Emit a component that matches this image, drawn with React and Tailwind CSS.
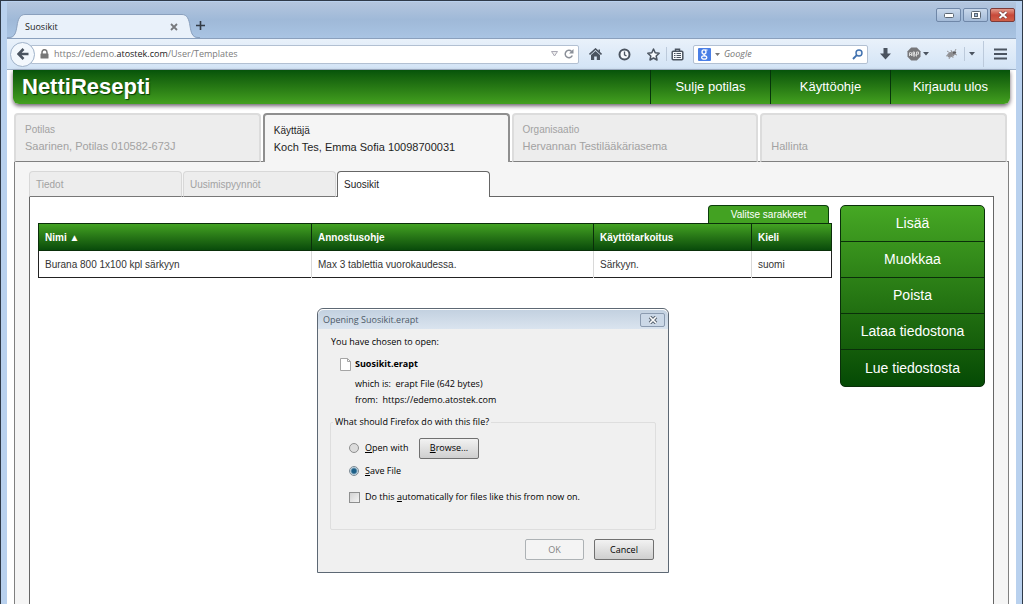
import React from "react";

const ICON = "#4b5460";

function TitleBar() {
  return (
    <div className="flex h-9 items-start justify-between bg-linear-to-b from-[#b4c6de] via-[#9fb9d8] to-[#a9c4e3]">
      <div className="flex h-9 items-end" role="tablist">
        <svg width="18" height="24" viewBox="0 0 18 24" aria-hidden="true">
          <path d="M0 24H2C8 24 9 18 10 12C11 5 13 .5 18 .5V24Z" fill="#e9f1fa" />
          <path d="M0 23.500H2C8 23.500 9 18 10 12C11 5 13 .5 18 .5" fill="none" stroke="#8aa0bd" />
        </svg>
        <div className="flex h-6 w-[157px] items-center justify-between border-t border-[#8aa0bd] bg-[#e9f1fa]">
          <button role="tab" aria-selected="true" className="text-[9px] text-[#1c1c1c]">Suosikit</button>
          <button aria-label="Close tab" className="mr-1">
            <svg width="8" height="8" viewBox="0 0 8 8"><path d="M1 1L7 7M7 1L1 7" stroke="#77797d" strokeWidth="1.800" /></svg>
          </button>
        </div>
        <svg width="18" height="24" viewBox="0 0 18 24" aria-hidden="true">
          <path d="M18 24H16C10 24 9 18 8 12C7 5 5 .5 0 .5V24Z" fill="#e9f1fa" />
          <path d="M18 23.500H16C10 23.500 9 18 8 12C7 5 5 .5 0 .5" fill="none" stroke="#8aa0bd" />
        </svg>
        <button aria-label="New tab" className="-ml-1 mb-2">
          <svg width="9" height="9" viewBox="0 0 9 9"><path d="M4.500 0V9M0 4.500H9" stroke="#333b45" strokeWidth="1.600" /></svg>
        </button>
      </div>
      <div className="flex gap-0.5 pt-1.5 pr-px">
        <button aria-label="Minimize" className="flex h-3.5 w-[25px] items-center justify-center rounded-xs border border-[#6f87a8] bg-linear-to-b from-[#c9d8eb] to-[#a3bad8]">
          <svg width="10" height="5" viewBox="0 0 10 5"><rect x=".5" y=".5" width="9" height="4" rx="1" fill="#fff" stroke="#5b6673" /></svg>
        </button>
        <button aria-label="Maximize" className="flex h-3.5 w-[25px] items-center justify-center rounded-xs border border-[#6f87a8] bg-linear-to-b from-[#c9d8eb] to-[#a3bad8]">
          <svg width="10" height="8" viewBox="0 0 10 8"><rect x=".5" y=".5" width="9" height="7" rx="1" fill="#fff" stroke="#5b6673" /><rect x="3.500" y="2.500" width="3" height="3" fill="#9db5d3" stroke="#5b6673" /></svg>
        </button>
        <button aria-label="Close" className="flex h-3.5 w-[25px] items-center justify-center rounded-xs border border-[#7d3a38] bg-linear-to-b from-[#e29a8c] via-[#c8493a] to-[#cf5f48]">
          <svg width="10" height="8" viewBox="0 0 10 8"><path d="M1.500 1L8.500 7M8.500 1L1.500 7" stroke="#6b3a38" strokeWidth="3.200" /><path d="M1.500 1L8.500 7M8.500 1L1.500 7" stroke="#fff" strokeWidth="2" /></svg>
        </button>
      </div>
    </div>
  );
}

function Caret() {
  return <svg width="6" height="4" viewBox="0 0 6 4" aria-hidden="true"><path d="M0 0H6L3 3.500Z" fill={ICON} /></svg>;
}

function Toolbar() {
  return (
    <div className="flex h-8 items-center border-y border-t-[#8aa0bd] border-b-[#9fb2c9] bg-linear-to-b from-[#e9f1fa] to-[#d3e4f6] pr-[9px] pl-[3px]">
      <button aria-label="Back" className="z-10 flex size-[25px] shrink-0 items-center justify-center rounded-full border border-[#9fb2c9] bg-[#f3f8fd]">
        <svg width="12" height="12" viewBox="0 0 12 12"><path d="M6.500 1L1.500 6L6.500 11M2 6H11.500" fill="none" stroke={ICON} strokeWidth="2.600" /></svg>
      </button>
      <div className="-ml-1 flex h-[19px] min-w-0 flex-1 items-center rounded-r-xs border border-[#b2c0d2] bg-white pl-2">
        <svg className="shrink-0" width="9" height="10" viewBox="0 0 9 10" aria-hidden="true"><path d="M2 5V3.200A2.500 2.500 0 0 1 7 3.200V5" fill="none" stroke="#777" strokeWidth="1.500" /><rect x=".5" y="4.500" width="8" height="5" rx=".5" fill="#777" /></svg>
        <div className="min-w-0 flex-1 truncate pl-[5px] text-[9px] text-[#7b7b7b]">
          https://edemo.<span className="text-[#1a1a1a]">atostek.com</span>/User/Templates
        </div>
        <svg width="7" height="6" viewBox="0 0 7 6" aria-hidden="true"><path d="M.5 .5H6.500L3.500 5Z" fill="#eee" stroke="#aaa9b5" /></svg>
        <button aria-label="Reload" className="mr-1 ml-1.5">
          <svg width="10" height="10" viewBox="0 0 10 10"><path d="M8.300 6.500A3.700 3.700 0 1 1 7.600 2.500" fill="none" stroke="#8a8f98" strokeWidth="1.500" /><path d="M9.500 0V4.500H5Z" fill="#8a8f98" /></svg>
        </button>
      </div>
      <button aria-label="Home" className="ml-2.5">
        <svg width="13" height="12" viewBox="0 0 13 12"><path d="M.5 6.500L6.500 1L12.500 6.500" fill="none" stroke={ICON} strokeWidth="1.600" /><path d="M9.500 1.500H11V4.500L9.500 3Z" fill={ICON} /><path d="M2 7L6.500 3L11 7V12H7.800V8.500H5.200V12H2Z" fill={ICON} /></svg>
      </button>
      <button aria-label="History" className="ml-4">
        <svg width="13" height="13" viewBox="0 0 13 13"><circle cx="6.500" cy="6.500" r="5" fill="#f7fafd" stroke={ICON} strokeWidth="2" /><path d="M6.500 3.500V6.800L8.500 8" fill="none" stroke={ICON} strokeWidth="1.300" /></svg>
      </button>
      <button aria-label="Bookmark this page" className="ml-4">
        <svg width="13" height="13" viewBox="0 0 13 13"><path d="M6.500 1L8.200 4.700L12.200 5.200L9.200 8L10 12L6.500 10L3 12L3.800 8L.8 5.200L4.800 4.700Z" fill="#f7fafd" stroke={ICON} strokeWidth="1.500" strokeLinejoin="round" /></svg>
      </button>
      <span className="ml-1.5 h-3.5 w-px bg-[#bccadb]" />
      <button aria-label="Bookmarks" className="ml-1">
        <svg width="13" height="13" viewBox="0 0 13 13"><rect x="1.200" y="3.200" width="10.600" height="8.600" rx="1" fill="#f7fafd" stroke={ICON} strokeWidth="1.500" /><path d="M4.500 3V1.200H8.500V3" fill="none" stroke={ICON} strokeWidth="1.500" /><path d="M3 5.500H4.500M5.500 5.500H10M3 7.500H4.500M5.500 7.500H10M3 9.500H4.500M5.500 9.500H10" stroke={ICON} strokeWidth="1" /></svg>
      </button>
      <div className="ml-[9px] flex h-[19px] w-[175px] shrink-0 items-center rounded-xs border border-[#b2c0d2] bg-white px-1">
        <svg className="shrink-0" width="13" height="13" viewBox="0 0 13 13" aria-hidden="true"><rect width="13" height="13" rx="1" fill="#4a7fe6" /><ellipse cx="6" cy="4" rx="2" ry="2.100" fill="none" stroke="#fff" strokeWidth="1.300" /><path d="M7 2H9.500M6.500 6C5 7 6 7 7.500 8.200" fill="none" stroke="#fff" strokeWidth="1.100" /><ellipse cx="6.200" cy="9.500" rx="2.600" ry="1.700" fill="none" stroke="#fff" strokeWidth="1.200" /></svg>
        <span className="mx-1"><svg width="5" height="3" viewBox="0 0 5 3"><path d="M0 0H5L2.500 3Z" fill="#777" /></svg></span>
        <input aria-label="Search" placeholder="Google" className="min-w-0 flex-1 bg-transparent text-[9px] italic outline-none placeholder:text-[#777]" />
        <button aria-label="Go">
          <svg width="11" height="11" viewBox="0 0 11 11"><circle cx="7" cy="4" r="3" fill="#eef5fc" stroke="#3e6fae" strokeWidth="1.400" /><path d="M4.800 6.200L1 10" stroke="#3e6fae" strokeWidth="1.900" /></svg>
        </button>
      </div>
      <button aria-label="Downloads" className="ml-3">
        <svg width="11" height="12" viewBox="0 0 11 12"><path d="M3.500 0H7.500V5.500H11L5.500 11.500L0 5.500H3.500Z" fill={ICON} /></svg>
      </button>
      <button aria-label="Adblock Plus" className="ml-4 flex items-center gap-0.5">
        <svg width="14" height="14" viewBox="0 0 14 14"><path d="M4.200 .5H9.800L13.500 4.200V9.800L9.800 13.500H4.200L.5 9.800V4.200Z" fill="#77777a" /><path d="M2.500 9V6L3.500 5L4.500 6V9M2.500 7.500H4.500M6 9V5H7.500V7H6H8V9ZM9.500 9.500V5H11.500V7.200H9.500" fill="none" stroke="#e3e3e3" strokeWidth=".9" /></svg>
        <Caret />
      </button>
      <button aria-label="Firebug" className="ml-4 flex items-center">
        <svg width="13" height="12" viewBox="0 0 13 12"><ellipse cx="6" cy="6.500" rx="4" ry="2.600" fill="#8d8d90" transform="rotate(-25 6 6.500)" /><circle cx="9.500" cy="4.500" r="1.600" fill="#5d5d60" /><path d="M2 3L5 5M6 2L7 5M1 8L4 7M4 11L5.500 8M8 10L7.500 7M12 7L9 6M11 1L9.500 4" stroke="#9a9a9e" strokeWidth="1" /></svg>
      </button>
      <span className="ml-1.5 h-3.5 w-px bg-[#bccadb]" />
      <button aria-label="Firebug menu" className="ml-1"><Caret /></button>
      <span className="ml-2 h-[26px] w-px bg-[#bccadb]" />
      <button aria-label="Menu" className="ml-2.5">
        <svg width="13" height="12" viewBox="0 0 13 12"><path d="M0 1.500H13M0 6H13M0 10.500H13" stroke={ICON} strokeWidth="2.200" /></svg>
      </button>
    </div>
  );
}

function Header() {
  const links = ["Sulje potilas", "Käyttöohje", "Kirjaudu ulos"];
  return (
    <header className="mx-1.5 flex h-[34px] items-stretch justify-between rounded-b-md bg-linear-to-b from-[#06540a] to-[#43a01f] shadow-[0_2px_4px_#6b5f6b]">
      <h1 className="pl-[9px] text-[22px] leading-[34px] font-bold text-white [text-shadow:1px_1px_1px_#063c06]">NettiResepti</h1>
      <nav className="flex">
        {links.map((l) => (
          <a key={l} href="#" className="flex w-[120px] items-center justify-center border-l border-[#06340a] text-[13px] text-white">{l}</a>
        ))}
      </nav>
    </header>
  );
}

function MainTabs() {
  const tabs = [
    ["Potilas", "Saarinen, Potilas 010582-673J"],
    ["Käyttäjä", "Koch Tes, Emma Sofia 10098700031"],
    ["Organisaatio", "Hervannan Testilääkäriasema"],
    ["", "Hallinta"],
  ];
  return (
    <div role="tablist" className="z-10 -mb-px flex gap-0.5 pr-0.5">
      {tabs.map(([top, main], i) => (
        <button
          key={main}
          role="tab"
          aria-selected={i === 1}
          className={
            i === 1
              ? "h-[49px] flex-1 rounded-t border-2 border-b-0 border-[#8f8f8f] bg-[#f5f5f5] px-[9px] text-left text-[#1e1e1e]"
              : "h-[49px] flex-1 rounded-t border-2 border-b border-[#dcdcdc] border-b-[#808080] bg-[#ededed] px-[9px] text-left text-[#a2a2a2]"
          }
        >
          <span className="block h-4 text-[10px] leading-4">{top}</span>
          <span className="block text-[11px] leading-4">{main}</span>
        </button>
      ))}
    </div>
  );
}

function SubTabs() {
  const tabs = ["Tiedot", "Uusimispyynnöt", "Suosikit"];
  return (
    <div role="tablist" className="z-10 -mb-px flex gap-px">
      {tabs.map((t, i) => (
        <button
          key={t}
          role="tab"
          aria-selected={i === 2}
          className={
            i === 2
              ? "h-[26px] w-[153px] rounded-t border border-b-0 border-[#666] bg-white px-1.5 text-left text-[10px] text-[#1e1e1e]"
              : "h-[26px] w-[153px] rounded-t border border-[#d8d8d8] border-b-[#777] bg-[#ededed] px-1.5 text-left text-[10px] text-[#a2a2a2]"
          }
        >
          {t}
        </button>
      ))}
    </div>
  );
}

function Favourites() {
  const head = "border border-[#0a2f0a] px-1.5 text-left font-bold text-white";
  const cell = "border-l border-[#d9d9d9] px-1.5 text-[#333] first:border-l-0";
  return (
    <div className="flex min-w-0 flex-1 flex-col">
      <button className="mr-[3px] h-[18px] w-[121px] self-end rounded-t border border-b-0 border-[#0b3d0b] bg-[#43a222] text-[10px] text-white">Valitse sarakkeet</button>
      <table className="w-full table-fixed border-collapse border border-[#222] text-[10px]">
        <colgroup>
          <col />
          <col className="w-[282px]" />
          <col className="w-[158px]" />
          <col className="w-[80px]" />
        </colgroup>
        <thead>
          <tr className="h-[27px] bg-linear-to-b from-[#43a222] to-[#06480a]">
            <th className={head}>Nimi ▲</th>
            <th className={head}>Annostusohje</th>
            <th className={head}>Käyttötarkoitus</th>
            <th className={head}>Kieli</th>
          </tr>
        </thead>
        <tbody>
          <tr className="h-[27px]">
            <td className={cell}>Burana 800 1x100 kpl särkyyn</td>
            <td className={cell}>Max 3 tablettia vuorokaudessa.</td>
            <td className={cell}>Särkyyn.</td>
            <td className={cell}>suomi</td>
          </tr>
        </tbody>
      </table>
    </div>
  );
}

function Actions() {
  const items = ["Lisää", "Muokkaa", "Poista", "Lataa tiedostona", "Lue tiedostosta"];
  return (
    <div className="flex w-[145px] shrink-0 flex-col divide-y divide-[#0a2f0a] self-start overflow-hidden rounded-[5px] border border-[#0a2f0a] bg-linear-to-b from-[#46a824] to-[#054a05]">
      {items.map((t) => (
        <button key={t} className="h-9 text-[14px] text-white">{t}</button>
      ))}
    </div>
  );
}

function Dialog() {
  return (
    <div role="dialog" aria-labelledby="dlg-title" className="absolute top-[307px] left-[316px] z-20 w-[352px] rounded-t-md border border-[#5d6874] bg-[#f0f0f0] font-['Open_Sans','Noto_Sans',sans-serif] text-[9px] leading-4 text-black">
      <div className="flex h-5 items-center justify-between rounded-t-md border-t border-white bg-linear-to-b from-[#c3d1e0] to-[#dae4ef] pr-[3px] pl-[5px]">
        <h2 id="dlg-title" className="text-[#4d5a68]">Opening Suosikit.erapt</h2>
        <button aria-label="Close dialog" className="flex h-3.5 w-[25px] items-center justify-center rounded-xs border border-[#8b9bb0] bg-[#cbd8e7]">
          <svg width="10" height="8" viewBox="0 0 10 8"><path d="M2 1L8 7M8 1L2 7" stroke="#5b6673" strokeWidth="3.600" /><path d="M2 1L8 7M8 1L2 7" stroke="#fff" strokeWidth="1.600" /></svg>
        </button>
      </div>
      <div className="px-3 pt-[5px] pb-3">
        <p className="pl-px">You have chosen to open:</p>
        <div className="mt-1.5 flex items-center gap-1 pl-2.5 font-bold">
          <svg width="11" height="13" viewBox="0 0 11 13" aria-hidden="true"><path d="M.5 .5H7.500L10.500 3.500V12.500H.5Z" fill="#fff" stroke="#a5a5a5" /><path d="M7.500 .5V3.500H10.500" fill="none" stroke="#a5a5a5" /></svg>
          Suosikit.erapt
        </div>
        <p className="mt-1 pl-[25px]">which is:&nbsp; erapt File (642 bytes)</p>
        <p className="pl-[25px]">from:&nbsp; https://edemo.atostek.com</p>
        <fieldset className="mt-1.5 h-[116px] rounded-xs border border-[#dedede] pl-[18px]">
          <legend className="-ml-4 px-0.5">What should Firefox do with this file?</legend>
          <div className="mt-[7px] flex h-[22px] items-center">
            <input type="radio" id="open" name="action" className="size-2.5 appearance-none rounded-full border border-[#8e8f8f] bg-[#dcdcdc]" />
            <label htmlFor="open" className="w-[60px] pl-1.5"><u>O</u>pen with</label>
            <button className="h-[21px] w-[60px] rounded-xs border border-[#707070] bg-linear-to-b from-[#f2f2f2] to-[#cfcfcf]"><u>B</u>rowse...</button>
          </div>
          <div className="mt-1 flex h-4 items-center">
            <input type="radio" id="save" name="action" defaultChecked className="size-2.5 appearance-none rounded-full border border-[#7c8a94] bg-[radial-gradient(circle,#1c5f87_0_2px,#dfeaf2_4px)]" />
            <label htmlFor="save" className="pl-1.5"><u>S</u>ave File</label>
          </div>
          <div className="mt-2.5 flex h-4 items-center">
            <input type="checkbox" id="auto" className="size-[11px] appearance-none border border-[#8e8f8f] bg-linear-to-br from-[#d2d2d2] to-[#f4f4f4]" />
            <label htmlFor="auto" className="pl-[5px]">Do this <u>a</u>utomatically for files like this from now on.</label>
          </div>
        </fieldset>
        <div className="mt-[9px] flex justify-end gap-2.5 pr-0.5">
          <button disabled className="h-[21px] w-[59px] rounded-xs border border-[#adb2b5] bg-[#f4f4f4] text-[#838383]">OK</button>
          <button className="h-[21px] w-[60px] rounded-xs border border-[#707070] bg-linear-to-b from-[#f2f2f2] to-[#cfcfcf]">Cancel</button>
        </div>
      </div>
    </div>
  );
}

export default function App() {
  return (
    <div className="relative flex min-h-screen flex-col border-x border-t border-[#2f3a48] bg-[#b9d1ee] pt-px font-['Liberation_Sans',sans-serif]">
      <div className="flex flex-1 flex-col px-1.5">
        <div className="font-['Open_Sans','Noto_Sans',sans-serif]">
          <TitleBar />
          <Toolbar />
        </div>
        <div className="flex flex-1 flex-col bg-white">
          <Header />
          <main className="flex flex-1 flex-col px-[7px] pt-[9px]">
            <MainTabs />
            <div className="flex flex-1 flex-col border border-b-0 border-[#808080] bg-[#f5f5f5] px-3.5 pt-[9px]">
              <SubTabs />
              <div className="flex flex-1 items-start gap-2 border border-b-0 border-[#666] bg-white p-2">
                <Favourites />
                <Actions />
              </div>
            </div>
          </main>
        </div>
      </div>
      <Dialog />
    </div>
  );
}
